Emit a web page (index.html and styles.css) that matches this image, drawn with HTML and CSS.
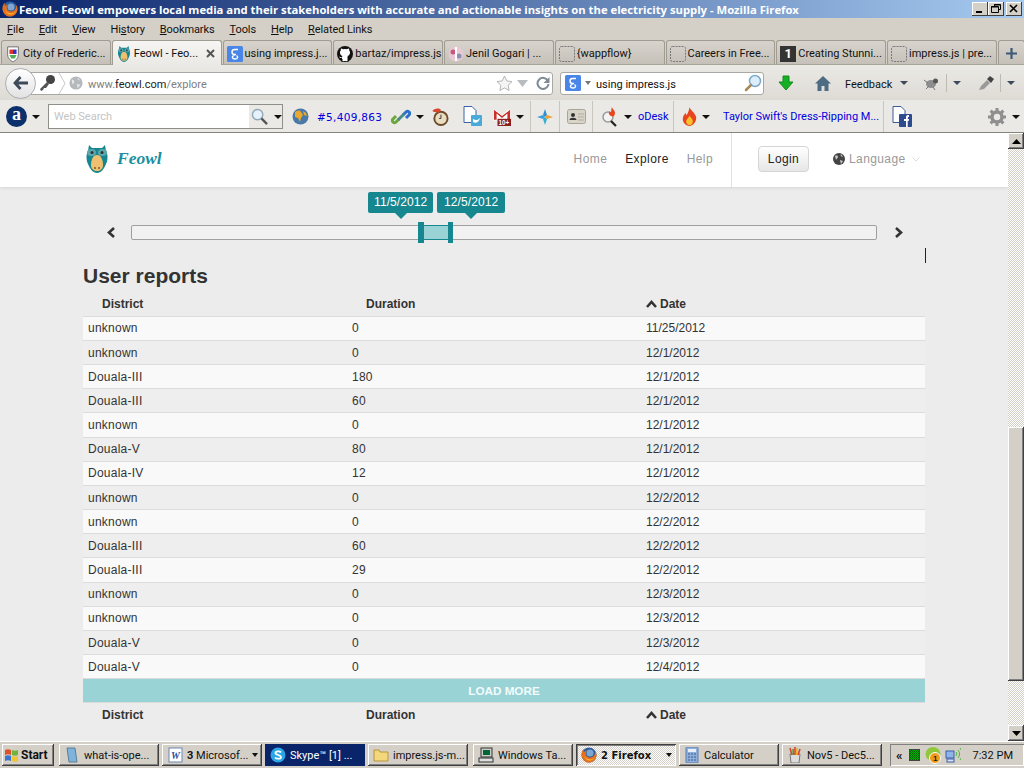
FILE: index.html
```html
<!DOCTYPE html>
<html lang="en">
<head>
    <meta charset="UTF-8">
    <title>Feowl - Mozilla Firefox</title>
    <link rel="stylesheet" href="styles.css">
</head>
<body>
    <!-- Shared icons -->
    <svg class="defs" width="0" height="0">
        <symbol id="firefox" viewBox="0 0 16 16">
            <circle cx="8" cy="8" r="7.5" fill="#2f5f9e"/>
            <circle cx="9" cy="6" r="3.5" fill="#7fa6d0"/>
            <path d="M3 1.5C1 3.5 0 6 .7 9.200 1.600 13 4.600 15.600 8 15.600c4 0 7.500-3.300 7.500-7.600 0-1.500-.5-3-1.200-4 .2 3-1 5.500-3.800 6.300C7.700 11 5 9.500 4.700 7 4.500 5.500 5.200 4.200 6 3.500 4.500 3.700 3.300 4.500 3 5.500 2.500 4.200 2.600 2.800 3 1.500z" fill="#e8701a"/>
            <path d="M3 9c1 3 3.500 5 6.500 4.500 2-.4 3.800-1.800 4.500-3.800-1.300 2-3.500 3-5.800 2.600C6 12 4.200 11 3 9z" fill="#f7b733"/>
        </symbol>
        <symbol id="owl" viewBox="0 0 22 28">
            <path d="M3 0l3 3h10l3-3 1 6c2 3 2 9 0 13-2 5-5 9-9 9s-7-4-9-9C0 15 0 9 2 6z" fill="#16868f"/>
            <ellipse cx="5.500" cy="7.500" rx="4.500" ry="3.500" fill="#5aa7ad"/>
            <ellipse cx="16.500" cy="7.500" rx="4.500" ry="3.500" fill="#5aa7ad"/>
            <circle cx="6" cy="7.500" r="1.500" fill="#333"/>
            <circle cx="16" cy="7.500" r="1.500" fill="#333"/>
            <path d="M11 10c4 0 6 5 6 10 0 4-3 6-6 6s-6-2-6-6c0-5 2-10 6-10z" fill="#efc06f"/>
            <circle cx="9" cy="23" r="1" fill="#7a5b2a"/>
            <circle cx="13" cy="23" r="1" fill="#7a5b2a"/>
        </symbol>
        <symbol id="blank" viewBox="0 0 16 16">
            <rect x=".5" y=".5" width="15" height="15" rx="2" fill="none" stroke="#777" stroke-dasharray="2 1"/>
        </symbol>
        <symbol id="gbox" viewBox="0 0 16 16">
            <rect width="16" height="16" rx="1.500" fill="#4a86e8"/>
            <path d="M11 3.500H7.500C5.500 3.500 5 5 5 6s.8 2.500 2.600 2.500H9M8 8.500l-2 1.500c-1 .8-1 3 2 3s3.200-2.500 1.500-3.500" fill="none" stroke="#fff" stroke-width="1.400"/>
        </symbol>
        <symbol id="loupe" viewBox="0 0 18 18">
            <circle cx="11" cy="7" r="5.500" fill="#dceefb" stroke="#7fa9c9" stroke-width="1.500"/>
            <path d="M7 11l-5 5" stroke="#a9895a" stroke-width="2.500" stroke-linecap="round"/>
        </symbol>
        <symbol id="flame" viewBox="0 0 16 20">
            <path d="M8 0c1 3 5 5 7 10 1 5-3 10-7 10s-8-4-7-9c.5-2 2-3.500 2.500-5 .8 1 1 2 1 3C6 7 7.500 3.500 8 0z" fill="#e8451f"/>
            <path d="M8 9c1 2 4 4 3.500 7-.4 2-2 3-3.500 3s-3.200-1-3.500-3C4.200 13 7 12 8 9z" fill="#fbc02d"/>
        </symbol>
    </svg>

    <div class="window">
        <div class="titlebar">
            <svg class="ti16"><use href="#firefox"/></svg>
            <span class="title-text">Feowl - Feowl empowers local media and their stakeholders with accurate and actionable insights on the electricity supply - Mozilla Firefox</span>
            <span class="win-btns">
                <span class="win-btn"><svg width="14" height="12"><rect x="3" y="8" width="6" height="2" fill="#000"/></svg></span>
                <span class="win-btn"><svg width="14" height="12"><path d="M5.500 3.500V1.500h6v5H9.500M2.500 3.500h7v6h-7zM2 4h7M5 2h6" fill="none" stroke="#000"/></svg></span>
                <span class="win-btn win-close"><svg width="14" height="12"><path d="M3 2l7 7M10 2l-7 7" stroke="#000" stroke-width="1.600"/></svg></span>
            </span>
        </div>

        <div class="menubar">
            <span><u>F</u>ile</span>
            <span><u>E</u>dit</span>
            <span><u>V</u>iew</span>
            <span>Hi<u>s</u>tory</span>
            <span><u>B</u>ookmarks</span>
            <span><u>T</u>ools</span>
            <span><u>H</u>elp</span>
            <span><u>R</u>elated Links</span>
        </div>

        <div class="tabs">
            <div class="tab">
                <svg class="ti16" viewBox="0 0 16 18"><path d="M2 1h12v9c0 4-3 6-6 8-3-2-6-4-6-8z" fill="#fff" stroke="#666"/><rect x="4" y="4" width="4" height="5" fill="#d33"/><rect x="8" y="4" width="4" height="5" fill="#33b"/><path d="M4 10h8l-2 4H6z" fill="#5a5"/></svg>
                <span class="tab-label">City of Frederic...</span>
            </div>
            <div class="tab tab-active">
                <svg class="ti16"><use href="#owl"/></svg>
                <span class="tab-label">Feowl - Feo...</span>
                <svg class="tab-x" width="9" height="9"><path d="M1 1l7 7M8 1L1 8" stroke="#555" stroke-width="2"/></svg>
            </div>
            <div class="tab">
                <svg class="ti16"><use href="#gbox"/></svg>
                <span class="tab-label">using impress.j...</span>
            </div>
            <div class="tab">
                <svg class="ti16" viewBox="0 0 16 16"><circle cx="8" cy="8" r="8" fill="#111"/><path d="M5 15v-3c-2 .4-2.500-1-3-1.500 1 0 1.500 1 3 1 0-1 .3-1.300.6-1.600C3.500 9.500 3 8 3 6.500c0-1 .3-1.500.8-2-.1-.6-.1-1.300.2-2 .8 0 1.500.4 2 .8a7 7 0 0 1 4 0c.5-.4 1.200-.8 2-.8.300.7.300 1.400.2 2 .5.5.8 1 .8 2 0 1.500-.5 3-2.600 3.400.4.400.6.800.6 1.600v3.500z" fill="#fff"/><path d="M5 16v-3M11 16v-5" stroke="#111"/></svg>
                <span class="tab-label">bartaz/impress.js</span>
            </div>
            <div class="tab">
                <svg class="ti16" viewBox="0 0 16 16"><circle cx="8" cy="8" r="7.500" fill="#e7c9d4"/><circle cx="5" cy="6" r="2.500" fill="#c9567f"/><circle cx="11" cy="10" r="2.500" fill="#8a8fb5"/><rect x="7" y="1" width="2" height="14" fill="#fff"/></svg>
                <span class="tab-label">Jenil Gogari | ...</span>
            </div>
            <div class="tab">
                <svg class="ti16"><use href="#blank"/></svg>
                <span class="tab-label">{wappflow}</span>
            </div>
            <div class="tab">
                <svg class="ti16"><use href="#blank"/></svg>
                <span class="tab-label">Careers in Free...</span>
            </div>
            <div class="tab">
                <span class="tuts-icon">1</span>
                <span class="tab-label">Creating Stunni...</span>
            </div>
            <div class="tab">
                <svg class="ti16"><use href="#blank"/></svg>
                <span class="tab-label">impress.js | pre...</span>
            </div>
            <div class="tab tab-new">
                <svg width="11" height="11"><path d="M5.500 0v11M0 5.500h11" stroke="#3c5a78" stroke-width="2.200"/></svg>
            </div>
        </div>

        <div class="navbar">
            <span class="back-btn">
                <svg width="16" height="14"><path d="M7.500 1L2 7l5.500 6M2.500 7H15" fill="none" stroke="#3c4a5a" stroke-width="2.800"/></svg>
            </span>
            <div class="urlbar">
                <svg class="key" width="18" height="18" viewBox="0 0 18 18"><circle cx="12.500" cy="5.500" r="4.500" fill="#444"/><path d="M9 8l-7 7 1 2 2-1 1-2 2 0 3-4" fill="#555"/></svg>
                <svg class="url-sep" width="8" height="21"><path d="M1 0l6 10.500-6 10.500" fill="#fff" stroke="#c8c8c8"/></svg>
                <svg class="globe" width="14" height="14" viewBox="0 0 16 16"><circle cx="8" cy="8" r="7.500" fill="#b5b8bc"/><path d="M3 4c2 0 3 1 3 3s-2 1-2 3M10 2c-1 2 1 3 3 3M9 9l4 1-3 4z" fill="#e6e8ea"/></svg>
                <span class="url-text">www.<b>feowl.com</b>/explore</span>
                <svg class="star" width="17" height="16" viewBox="0 0 17 16"><path d="M8.500 1l2.300 4.900 5.200.7-3.800 3.600.9 5.300-4.600-2.600-4.600 2.600.9-5.300L1 6.600l5.200-.7z" fill="#f4f4f4" stroke="#b5b5b5"/></svg>
                <svg class="url-drop" width="11" height="7"><path d="M0 0h11L5.500 7z" fill="#b8bcc0"/></svg>
                <svg class="reload" width="14" height="14" viewBox="0 0 14 14"><path d="M12 5a5.500 5.500 0 1 0 .5 3" fill="none" stroke="#7f8a94" stroke-width="2"/><path d="M13.500 1v6h-6z" fill="#7f8a94"/></svg>
            </div>
            <div class="searchbar">
                <svg class="ti16"><use href="#gbox"/></svg>
                <i class="caret caret-grey"></i>
                <span class="search-text">using impress.js</span>
                <svg class="search-loupe" width="18" height="18"><use href="#loupe"/></svg>
            </div>
            <svg class="down-arrow" width="16" height="16" viewBox="0 0 16 16"><path d="M5 1h6v6h4l-7 8-7-8h4z" fill="#17b024" stroke="#128a1c"/></svg>
            <svg class="home" width="16" height="15" viewBox="0 0 16 15"><path d="M8 0L0 7.500h2.500V15h4v-5h3v5h4V7.500H16z" fill="#4d6b82"/></svg>
            <span class="feedback">Feedback</span>
            <i class="caret caret-slate"></i>
            <svg class="bug" width="18" height="13" viewBox="0 0 16 13"><ellipse cx="8" cy="7" rx="5" ry="4" fill="#8d8d8d"/><circle cx="12.500" cy="4" r="2.500" fill="#555"/><path d="M1 3l4 3M3 12l3-3M10 10l2 3" stroke="#777"/></svg>
            <span class="nav-sep"></span>
            <i class="caret caret-slate"></i>
            <svg class="dropper" width="16" height="15" viewBox="0 0 16 15"><path d="M1 14l2-4 6-6 3 3-6 6z" fill="#999"/><path d="M9 3l3-3 4 3-3 4z" fill="#444"/></svg>
            <span class="nav-sep"></span>
            <i class="caret caret-slate"></i>
        </div>

        <div class="bookmarks">
            <div class="bm-group bm-first">
                <span class="alexa">a</span>
                <i class="caret"></i>
                <div class="web-search">
                    <span class="web-search-text">Web Search</span>
                    <span class="web-search-btn">
                        <svg width="17" height="17" viewBox="0 0 18 18"><circle cx="7" cy="7" r="5.500" fill="#e8f2fa" stroke="#8fa9bd" stroke-width="1.500"/><path d="M11 11l6 6" stroke="#555" stroke-width="2.500"/></svg>
                        <i class="caret"></i>
                    </span>
                </div>
                <svg class="ti17" viewBox="0 0 17 17"><circle cx="8.500" cy="8.500" r="8" fill="#4a78a8"/><path d="M3 4c3-2 5-2 6 0l2 3-2 3-1 4-2-4-3-1zM11 3l3 2 1 3-3-1z" fill="#e8a92c"/></svg>
                <span class="rank">#5,409,863</span>
                <svg class="ti20" viewBox="0 0 20 20"><path d="M8 12l-3 3c-2 2-5-1-3-3l3-3" fill="none" stroke="#6aa83a" stroke-width="3"/><path d="M12 8l3-3c2-2 5 1 3 3l-3 3" fill="none" stroke="#2a6fc9" stroke-width="3"/><path d="M7 13l6-6" stroke="#4a8a8a" stroke-width="3"/></svg>
                <i class="caret"></i>
                <svg class="ti18 push-a" viewBox="0 0 18 19"><circle cx="10" cy="11" r="7" fill="#e9dcc0" stroke="#6b4a2a" stroke-width="2"/><path d="M10 7v4h-2" stroke="#333" fill="none"/><path d="M1 3c3-3 7-3 9-1l-2 3-6-1z" fill="#d8452c"/></svg>
                <svg class="ti21 push-b" viewBox="0 0 21 21"><path d="M2 .5h8l4 4v12H2z" fill="#fff" stroke="#3a62a8"/><rect x="9" y="9" width="11" height="11" rx="1" fill="#49a9d8"/><path d="M11 13c3 2 5 1 7-1-1 4-4 6-7 4" fill="#fff"/></svg>
                <svg class="ti18 push-c" viewBox="0 0 20 20"><path d="M0 2h3l7 6 7-6h3v12H0z" fill="#fff"/><path d="M1 2v11h3V6l6 5 6-5v7h3V2l-9 7z" fill="#c9302c"/><rect x="5" y="12" width="15" height="8" fill="#8a1f1b"/><text x="6" y="19" class="gmail-count">10+</text></svg>
                <i class="caret"></i>
            </div>
            <div class="bm-group bm-small">
                <svg width="16" height="16" viewBox="0 0 16 16"><path d="M8 0l2 6-2 2-2-2z" fill="#2f8fd0"/><path d="M8 16l-2-6 2-2 2 2z" fill="#2fb0d0"/><path d="M0 8l6-2 2 2-2 2z" fill="#3a9fe0"/><path d="M16 8l-6 2-2-2 2-2z" fill="#f0a030"/></svg>
            </div>
            <div class="bm-group bm-card">
                <svg width="19" height="15" viewBox="0 0 19 15"><rect x=".5" y=".5" width="18" height="14" rx="2" fill="#d8d4c8" stroke="#a8a498"/><circle cx="6" cy="6" r="2" fill="#333"/><path d="M2.500 11c0-3 7-3 7 0z" fill="#333"/><path d="M11 5h6M11 8h6M11 11h6" stroke="#b0ac9e"/></svg>
            </div>
            <div class="bm-group bm-odesk">
                <svg width="18" height="20" viewBox="0 0 18 20"><circle cx="7" cy="10" r="5" fill="#f3f3f3" stroke="#999" stroke-width="1.500"/><path d="M10 14l5 5" stroke="#222" stroke-width="2.200"/><path d="M11 0c0 2 3 3 3 6s-2 4-4 3-3-3-1-5c0 1 .5 1.500 1 1 .5-1 0-3 1-5z" fill="#e8451f"/></svg>
                <i class="caret"></i>
                <span class="bm-link">oDesk</span>
            </div>
            <div class="bm-group bm-taylor">
                <svg width="15" height="19"><use href="#flame"/></svg>
                <i class="caret"></i>
                <span class="bm-link bm-news">Taylor Swift's Dress-Ripping M...</span>
            </div>
            <div class="bm-group bm-last">
                <svg class="ti21" viewBox="0 0 21 21"><path d="M1 .5h8l4 4v12H1z" fill="#fff" stroke="#3a5a9a"/><rect x="7" y="8" width="13" height="13" rx="1" fill="#2f4b8f"/><path d="M14 21v-6h-2v-2h2v-2c0-1.500 1-2 3-2v2c-1 0-1.200 0-1.200 1v1H17l-.3 2h-1v6z" fill="#fff"/></svg>
            </div>
            <div class="bm-gear">
                <svg width="18" height="18" viewBox="0 0 18 18"><circle cx="9" cy="9" r="5" fill="none" stroke="#8f8f8f" stroke-width="3.500"/><path d="M9 0v4M9 14v4M0 9h4M14 9h4M2.600 2.600l3 3M12.400 12.400l3 3M15.400 2.600l-3 3M5.600 12.400l-3 3" stroke="#8f8f8f" stroke-width="3"/></svg>
                <i class="caret"></i>
            </div>
        </div>

        <div class="viewport">
            <div class="page">
                <header class="site-head">
                    <div class="logo">
                        <svg width="22" height="28"><use href="#owl"/></svg>
                        <span class="logo-text">Feowl</span>
                    </div>
                    <nav class="site-nav">
                        <a>Home</a>
                        <a class="current">Explore</a>
                        <a>Help</a>
                    </nav>
                    <div class="site-user">
                        <button class="login">Login</button>
                        <svg width="12" height="12" viewBox="0 0 12 12"><circle cx="6" cy="6" r="6" fill="#444"/><path d="M2 3c2-1 3 0 3 1S3 6 3 7M8 1c-1 2 0 2 2 3M7 7l3 1-2 3z" fill="#ccc"/></svg>
                        <span class="lang">Language</span>
                        <svg width="8" height="5"><path d="M.5.500l3.500 3.500L7.500.5" fill="none" stroke="#ddd"/></svg>
                    </div>
                </header>

                <div class="timeline">
                    <svg class="tl-arrow" width="9" height="11"><path d="M7 1L2 5.500 7 10" fill="none" stroke="#333" stroke-width="2.600"/></svg>
                    <div class="slider">
                        <div class="slider-range"></div>
                        <div class="date-tip tip-from">11/5/2012</div>
                        <div class="date-tip tip-to">12/5/2012</div>
                    </div>
                    <svg class="tl-arrow" width="9" height="11"><path d="M2 1l5 4.500L2 10" fill="none" stroke="#333" stroke-width="2.600"/></svg>
                </div>

                <h2 class="reports-title">User reports</h2>

                <div class="reports">
                    <div class="row row-head">
                        <span>District</span>
                        <span>Duration</span>
                        <span class="date-head"><svg width="11" height="8"><path d="M1 7l4.500-5L10 7" fill="none" stroke="#333" stroke-width="2.600"/></svg>Date</span>
                    </div>
                    <div class="row"><span>unknown</span><span>0</span><span>11/25/2012</span></div>
                    <div class="row"><span>unknown</span><span>0</span><span>12/1/2012</span></div>
                    <div class="row"><span>Douala-III</span><span>180</span><span>12/1/2012</span></div>
                    <div class="row"><span>Douala-III</span><span>60</span><span>12/1/2012</span></div>
                    <div class="row"><span>unknown</span><span>0</span><span>12/1/2012</span></div>
                    <div class="row"><span>Douala-V</span><span>80</span><span>12/1/2012</span></div>
                    <div class="row"><span>Douala-IV</span><span>12</span><span>12/1/2012</span></div>
                    <div class="row"><span>unknown</span><span>0</span><span>12/2/2012</span></div>
                    <div class="row"><span>unknown</span><span>0</span><span>12/2/2012</span></div>
                    <div class="row"><span>Douala-III</span><span>60</span><span>12/2/2012</span></div>
                    <div class="row"><span>Douala-III</span><span>29</span><span>12/2/2012</span></div>
                    <div class="row"><span>unknown</span><span>0</span><span>12/3/2012</span></div>
                    <div class="row"><span>unknown</span><span>0</span><span>12/3/2012</span></div>
                    <div class="row"><span>Douala-V</span><span>0</span><span>12/3/2012</span></div>
                    <div class="row"><span>Douala-V</span><span>0</span><span>12/4/2012</span></div>
                    <div class="load-more">LOAD MORE</div>
                    <div class="row row-head">
                        <span>District</span>
                        <span>Duration</span>
                        <span class="date-head"><svg width="11" height="8"><path d="M1 7l4.500-5L10 7" fill="none" stroke="#333" stroke-width="2.600"/></svg>Date</span>
                    </div>
                </div>
                <span class="text-cursor"></span>
            </div>

            <div class="scrollbar">
                <span class="sb-btn"><svg width="9" height="5"><path d="M0 5h9L4.500 0z" fill="#000"/></svg></span>
                <span class="sb-track-top"></span>
                <span class="sb-thumb"></span>
                <span class="sb-track-bottom"></span>
                <span class="sb-btn"><svg width="9" height="5"><path d="M0 0h9L4.500 5z" fill="#000"/></svg></span>
            </div>
        </div>

        <div class="taskbar">
            <span class="task start">
                <svg width="15" height="15" viewBox="0 0 15 15"><path d="M1 2c2-1 4-1 6 0v5C5 6 3 6 1 7z" fill="#e0502a"/><path d="M8 2c2 1 4 1 6 0v5c-2 1-4 1-6 0z" fill="#6fb33a"/><path d="M1 8c2-1 4-1 6 0v5c-2-1-4-1-6 0z" fill="#3a76d0"/><path d="M8 8c2 1 4 1 6 0v5c-2 1-4 1-6 0z" fill="#f2c230"/></svg>
                Start
            </span>
            <span class="task task-1">
                <svg class="ti16" viewBox="0 0 16 16"><path d="M3 1h8l2 14H5z" fill="#7fb3d9" stroke="#5a7f9a"/></svg>
                <span class="task-label">what-is-ope...</span>
            </span>
            <span class="task task-2">
                <svg class="ti16" viewBox="0 0 16 16"><rect x="2" y="1" width="13" height="14" fill="#fff" stroke="#6a85b5"/><text x="4" y="12" class="word-w">W</text></svg>
                <span class="task-label"><b>3</b> Microsof...</span>
                <i class="caret"></i>
            </span>
            <span class="task task-3 task-skype">
                <svg class="ti16" viewBox="0 0 16 16"><circle cx="8" cy="8" r="7.500" fill="#2aa6e6"/><path d="M11 5.500C10 4 5.500 4 5.500 6c0 2.500 5.500 1.500 5.500 4.200C11 12 6.500 12.300 5 10.500" fill="none" stroke="#fff" stroke-width="1.800"/></svg>
                <span class="task-label">Skype™ [1] ...</span>
            </span>
            <span class="task task-4">
                <svg class="ti16" viewBox="0 0 16 16"><path d="M1 3h5l1 2h8v9H1z" fill="#f4d77a" stroke="#b8963a"/></svg>
                <span class="task-label">impress.js-m...</span>
            </span>
            <span class="task task-5">
                <svg class="ti16" viewBox="0 0 16 16"><rect x="3" y="1" width="11" height="9" fill="#ccc" stroke="#333"/><rect x="5" y="3" width="7" height="5" fill="#063"/><rect x="1" y="11" width="14" height="4" fill="#ddd" stroke="#333"/></svg>
                <span class="task-label">Windows Ta...</span>
            </span>
            <span class="task task-6 task-pressed">
                <svg class="ti16"><use href="#firefox"/></svg>
                <span class="task-label"><b>2 Firefox</b></span>
                <i class="caret"></i>
            </span>
            <span class="task task-7">
                <svg class="ti16" viewBox="0 0 16 16"><rect x="2" y="0" width="12" height="16" rx="1" fill="#8fb0dc" stroke="#5a7cae"/><rect x="4" y="2" width="8" height="3" fill="#e8f0fa"/><path d="M4 7h2M7 7h2M10 7h2M4 10h2M7 10h2M10 10h2M4 13h2M7 13h2M10 13h2" stroke="#3a5a8a"/></svg>
                <span class="task-label">Calculator</span>
            </span>
            <span class="task task-8">
                <svg class="ti16" viewBox="0 0 16 16"><path d="M3 7h10l-1 9H4z" fill="#ddd" stroke="#777"/><path d="M5 8L3 1M8 8V0M11 8l2-6" stroke="#d8452c" stroke-width="1.600"/><path d="M6.500 8L6 2" stroke="#4a9a3a" stroke-width="1.600"/><path d="M9.500 8L10 1" stroke="#e8b02c" stroke-width="1.600"/></svg>
                <span class="task-label">Nov5 - Dec5...</span>
            </span>
            <span class="tray">
                <b class="tray-more">«</b>
                <span class="tray-meter"></span>
                <svg width="18" height="19" viewBox="0 0 18 19"><ellipse cx="8" cy="8" rx="7.500" ry="7" fill="#8fc93a"/><circle cx="10" cy="12" r="5.500" fill="#f09a1a" stroke="#fff"/><text x="8" y="15" class="tray-num">1</text></svg>
                <svg width="16" height="16" viewBox="0 0 16 16"><rect x="1" y="4" width="8" height="7" fill="#8fb4e8" stroke="#3a5fa8"/><rect x="2" y="12" width="7" height="3" fill="#d8e2f4" stroke="#3a5fa8"/><path d="M11 5a3 3 0 0 1 0 4M13 3a6 6 0 0 1 0 8M15 1a9 9 0 0 1 0 12" fill="none" stroke="#4fb33a"/></svg>
                <span class="clock">7:32 PM</span>
            </span>
        </div>
    </div>
</body>
</html>
```

FILE: styles.css
```css
/* Base */
body {
    margin: 0;
    overflow: hidden;
    font-family: Roboto, "Liberation Sans", sans-serif;
    font-size: 11px;
    color: #111;
}

.defs {
    display: block;
    height: 0;
}

.window {
    width: 1024px;
    height: 768px;
    display: flex;
    flex-direction: column;
    background-color: #d4d0c8;
    overflow: hidden;
}

.ti16 { width: 16px; height: 16px; flex: none; }
.ti17 { width: 17px; height: 17px; flex: none; }
.ti18 { width: 18px; height: 18px; flex: none; }
.ti20 { width: 20px; height: 20px; flex: none; }
.ti21 { width: 21px; height: 21px; flex: none; }

.caret {
    display: inline-block;
    flex: none;
    width: 0;
    height: 0;
    border-left: 4px solid transparent;
    border-right: 4px solid transparent;
    border-top: 4px solid #111;
}

.caret-grey { border-top-color: #777; border-left-width: 3px; border-right-width: 3px; }
.caret-slate { border-top-color: #3c4a5a; }

/* Title bar */
.titlebar {
    height: 18px;
    flex: none;
    display: flex;
    align-items: center;
    padding-left: 2px;
    background: linear-gradient(to right, #0a246a, #a6caf0);
    color: #fff;
}

.title-text {
    margin-left: 1px;
    font-family: "Open Sans", sans-serif;
    font-weight: 700;
    font-size: 11.27px;
    white-space: nowrap;
}

.win-btns {
    margin-left: auto;
    display: flex;
    padding-right: 2px;
}

.win-btn {
    width: 16px;
    height: 14px;
    display: flex;
    align-items: center;
    justify-content: center;
    background-color: #d4d0c8;
    box-shadow: inset -1px -1px #404040, inset 1px 1px #fff;
}

.win-close { margin-left: 2px; }

/* Menu */
.menubar {
    height: 22px;
    flex: none;
    display: flex;
    align-items: center;
    gap: 15px;
    padding-left: 7px;
    box-sizing: border-box;
    letter-spacing: -.1px;
}

/* Tabs */
.tabs {
    height: 25px;
    flex: none;
    display: flex;
    padding-left: 1px;
    gap: 1px;
    border-bottom: 1px solid #a8a498;
    box-sizing: border-box;
}

.tab {
    width: 109.75px;
    height: 24px;
    flex: none;
    display: flex;
    align-items: center;
    gap: 2px;
    padding: 2px 0 0 3px;
    box-sizing: border-box;
    background: linear-gradient(#d8d4cd, #c5c1b9);
    border: 1px solid #a09c92;
    border-bottom: none;
    border-radius: 3px 3px 0 0;
    white-space: nowrap;
    overflow: hidden;
}

.tab-active {
    height: 25px;
    padding-bottom: 1px;
    background: linear-gradient(#f6f5f3, #ebe9e5);
    position: relative;
}

.tab-x {
    margin-left: auto;
    margin-right: 6px;
    flex: none;
}

.tab-new {
    width: 27px;
    padding-left: 7px;
}

.tuts-icon {
    width: 16px;
    height: 16px;
    flex: none;
    background-color: #333;
    color: #fff;
    font-weight: 700;
    font-size: 13px;
    line-height: 16px;
    text-align: center;
}

/* Navigation toolbar */
.navbar {
    height: 35px;
    flex: none;
    display: flex;
    align-items: center;
    box-sizing: border-box;
    padding: 1px 0 0 5px;
    background: linear-gradient(#ebe9e5, #dedbd5);
}

.back-btn {
    width: 31px;
    height: 31px;
    flex: none;
    box-sizing: border-box;
    display: flex;
    align-items: center;
    justify-content: center;
    border: 1px solid #a9adb3;
    border-radius: 50%;
    background: linear-gradient(#fff, #e2e2e2);
    position: relative;
    z-index: 2;
}

.urlbar {
    width: 523px;
    height: 23px;
    margin-left: -6px;
    flex: none;
    display: flex;
    align-items: center;
    box-sizing: border-box;
    padding-left: 7px;
    background-color: #fff;
    border: 1px solid #a8a8a4;
    border-radius: 0 3px 3px 0;
}

.url-sep { margin-left: 2px; margin-right: 3px; flex: none; }
.globe { flex: none; }

.url-text {
    margin-left: 5px;
    padding-top: 2px;
    color: #808080;
}

.url-text b {
    font-weight: 400;
    color: #222;
}

.star { margin-left: auto; }
.url-drop { margin-left: 4px; }
.reload { margin-left: 8px; margin-right: 2px; }

.searchbar {
    width: 204px;
    height: 23px;
    margin-left: 7px;
    flex: none;
    display: flex;
    align-items: center;
    box-sizing: border-box;
    padding-left: 4px;
    background-color: #fff;
    border: 1px solid #a8a8a4;
    border-radius: 3px;
}

.searchbar .caret { margin-left: 4px; }
.search-text { margin-left: 5px; padding-top: 2px; }
.search-loupe { margin-left: auto; margin-right: 1px; }

.down-arrow { margin-left: 14px; flex: none; }
.home { margin-left: 21px; flex: none; }
.feedback { margin-left: 14px; padding-top: 2px; }
.navbar > .feedback + .caret { margin-left: 8px; }
.bug { margin-left: 14px; flex: none; }
.dropper { margin-left: 17px; flex: none; }

.nav-sep {
    width: 1px;
    height: 18px;
    margin: 0 6px 0 6px;
    flex: none;
    background-color: #bdbab2;
}

/* Bookmarks toolbar */
.bookmarks {
    height: 33px;
    flex: none;
    display: flex;
    box-sizing: border-box;
    padding-top: 1px;
    background-color: #ebe9e5;
    border-bottom: 1px solid #86847c;
}

.bm-group {
    display: flex;
    flex: none;
    align-items: center;
    gap: 9px;
    border-right: 1px solid #c9c6be;
    box-sizing: border-box;
}

.bm-group svg { flex: none; }
.bm-group .caret { margin-left: -4px; }

.bm-first { width: 531px; padding-left: 6px; }
.bm-small { width: 29px; padding-left: 6px; }
.bm-card { width: 33px; padding-left: 7px; }
.bm-odesk { width: 81px; padding-left: 8px; }
.bm-odesk .bm-link { margin-left: -3px; }
.bm-taylor { width: 210px; padding-left: 8px; }
.bm-taylor .caret { margin-right: 4px; }
.bm-last { border-right: none; padding-left: 8px; }

.bm-gear {
    margin-left: auto;
    padding-right: 4px;
    display: flex;
    align-items: center;
    gap: 6px;
}

.alexa {
    width: 21px;
    height: 21px;
    flex: none;
    border-radius: 50%;
    background-color: #0d2f6b;
    color: #fff;
    font: 700 18px/17px "Liberation Serif", serif;
    text-align: center;
}

.web-search {
    width: 235px;
    height: 25px;
    margin-left: -1px;
    flex: none;
    display: flex;
    box-sizing: border-box;
    border: 1px solid #8f8f8a;
    background-color: #fff;
}

.web-search-text {
    flex: 1;
    padding-left: 5px;
    line-height: 23px;
    color: #c4c4c4;
}

.web-search-btn {
    width: 33px;
    display: flex;
    align-items: center;
    gap: 6px;
    padding-left: 2px;
    box-sizing: border-box;
    background-color: #ebe9e5;
}

.web-search-btn .caret { margin-left: 0; }

.rank {
    color: #0000e0;
    letter-spacing: .3px;
    font-family: "DejaVu Sans", sans-serif;
    font-size: 10.5px;
    margin-left: -1px;
}

.bm-link { color: #0000e0; white-space: nowrap; }
.push-a { margin-left: -2px; }
.push-b { margin-left: 4px; }
.push-c { margin-left: 1px; }

.gmail-count {
    font: 700 7px "Liberation Sans", sans-serif;
    fill: #fff;
}

/* Web page */
.viewport {
    flex: 1;
    min-height: 0;
    display: flex;
}

.page {
    width: 1008px;
    flex: none;
    position: relative;
    overflow: hidden;
    background-color: #ececec;
    font-family: "Liberation Sans", Arial, sans-serif;
    font-size: 12px;
    letter-spacing: .4px;
    color: #333;
}

.site-head {
    height: 54px;
    display: flex;
    align-items: stretch;
    background-color: #fff;
    box-shadow: 0 1px 3px rgba(0, 0, 0, .1);
}

.logo {
    display: flex;
    align-items: center;
    gap: 9px;
    padding-left: 86px;
    padding-bottom: 3px;
}

.logo-text {
    font: italic 700 17.5px "Liberation Serif", serif;
    letter-spacing: 0;
    color: #1a8fa0;
}

.site-nav {
    margin-left: auto;
    display: flex;
    align-items: center;
    gap: 18px;
    padding-right: 18px;
    border-right: 1px solid #e2e2e2;
    padding-bottom: 2px;
    color: #999;
}

.site-nav .current { color: #222; }

.site-user {
    width: 276px;
    display: flex;
    align-items: center;
    padding-left: 26px;
    padding-bottom: 2px;
    box-sizing: border-box;
}

.login {
    width: 51px;
    height: 26px;
    margin-right: 24px;
    padding: 0;
    font: inherit;
    letter-spacing: .4px;
    color: #222;
    border: 1px solid #d5d5d5;
    border-radius: 4px;
    background: linear-gradient(#fff, #e6e6e6);
}

.lang {
    margin: 0 6px 0 4px;
    color: #999;
}

.timeline {
    display: flex;
    align-items: center;
    margin-top: 38px;
    padding-left: 107px;
}

.tl-arrow { flex: none; }

.slider {
    width: 746px;
    height: 15px;
    margin: 0 17px 0 15px;
    box-sizing: border-box;
    position: relative;
    background-color: #f1f1f1;
    border: 1px solid #a0a0a0;
    border-radius: 2px;
}

.slider-range {
    position: absolute;
    left: 286px;
    top: -4px;
    width: 35px;
    height: 21px;
    box-sizing: border-box;
    background-color: #99d3d6;
    border-left: 6px solid #16868f;
    border-right: 5px solid #16868f;
    box-shadow: inset 0 3px #ececec, inset 0 4px #16868f, inset 0 -3px #ececec, inset 0 -4px #16868f;
}

.date-tip {
    position: absolute;
    top: -34px;
    height: 21px;
    padding: 0 6px;
    line-height: 21px;
    letter-spacing: .1px;
    color: #fff;
    background-color: #16868f;
    border-radius: 2px;
}

.date-tip::after {
    content: "";
    position: absolute;
    left: 50%;
    top: 21px;
    margin-left: -6px;
    border-left: 6px solid transparent;
    border-right: 6px solid transparent;
    border-top: 6px solid #16868f;
}

.tip-from { left: 236px; }
.tip-to { left: 305px; padding: 0 7px; }

.reports-title {
    margin: 24px 0 4.6px 83px;
    font-size: 21px;
    line-height: 24px;
    font-weight: 700;
    letter-spacing: 0;
    color: #333;
}

.reports {
    width: 842px;
    margin-left: 83px;
}

.row {
    height: 24.18px;
    box-sizing: border-box;
    display: grid;
    grid-template-columns: 264px 294px 1fr;
    align-items: center;
    padding-left: 5px;
    letter-spacing: .25px;
    border-bottom: 1px solid #dcdcdc;
    background-color: #eee;
}

.row span:last-child { letter-spacing: 0; }

.row:nth-child(even) {
    background-color: #f9f9f9;
}

.reports .row-head {
    background-color: transparent;
    font-weight: 700;
    letter-spacing: 0;
}

.row-head span { padding-left: 14px; }

.row-head .date-head {
    padding-left: 0;
    display: flex;
    align-items: center;
    gap: 3px;
}

.load-more + .row-head { border-bottom: none; }

.load-more {
    height: 24px;
    box-sizing: border-box;
    text-align: center;
    line-height: 24px;
    font-size: 11.7px;
    font-weight: 700;
    letter-spacing: 0;
    color: #f4fbfb;
    background-color: #99d3d6;
    border-bottom: 1px solid #dcdcdc;
}

.text-cursor {
    position: absolute;
    left: 925px;
    top: 115px;
    width: 1px;
    height: 15px;
    background-color: #222;
}

/* Scrollbar */
.scrollbar {
    width: 16px;
    flex: none;
    display: flex;
    flex-direction: column;
}

.sb-btn {
    height: 16px;
    flex: none;
    display: flex;
    align-items: center;
    justify-content: center;
    background-color: #d4d0c8;
    box-shadow: inset -1px -1px #404040, inset 1px 1px #fff, inset -2px -2px #808080;
}

.sb-track-top,
.sb-track-bottom {
    background: repeating-conic-gradient(#fff 0 25%, #d4d0c8 0 50%) 0 0 / 2px 2px;
}

.sb-track-top { height: 278px; flex: none; }
.sb-track-bottom { flex: 1; }

.sb-thumb {
    height: 254px;
    flex: none;
    background-color: #d4d0c8;
    box-shadow: inset -1px -1px #404040, inset 1px 1px #fff, inset -2px -2px #808080;
}

/* Task bar */
.taskbar {
    height: 27px;
    flex: none;
    display: flex;
    align-items: center;
    box-sizing: border-box;
    padding-left: 2px;
    border-top: 1px solid #fff;
    background-color: #d4d0c8;
}

.task {
    height: 22px;
    width: 100px;
    flex: none;
    display: flex;
    align-items: center;
    gap: 4px;
    padding-left: 5px;
    box-sizing: border-box;
    background-color: #d4d0c8;
    box-shadow: inset -1px -1px #404040, inset 1px 1px #fff, inset -2px -2px #808080;
    white-space: nowrap;
    margin-right: 3px;
}

.task-label { overflow: hidden; }
.task .caret { margin-left: auto; margin-right: 4px; border-left-width: 3px; border-right-width: 3px; }

.start {
    width: 52px;
    padding-left: 2px;
    gap: 2px;
    margin-right: 5px;
    font-weight: 700;
    font-size: 12px;
}

.task-skype {
    background-color: #0a246a;
    color: #fff;
    box-shadow: none;
}

.task-5 { margin-left: 2px; }

.task-pressed {
    background: repeating-conic-gradient(#fff 0 25%, #d4d0c8 0 50%) 0 0 / 2px 2px;
    box-shadow: inset 1px 1px #404040, inset -1px -1px #fff, inset 2px 2px #808080;
}

.task-pressed b {
    font-family: "DejaVu Sans", sans-serif;
    font-size: 10px;
}

.word-w {
    font: italic 700 10px "Liberation Serif", serif;
    fill: #2a4f9a;
}

.tray {
    height: 22px;
    margin-left: 5px;
    flex: 1;
    display: flex;
    align-items: center;
    gap: 2px;
    padding-left: 6px;
    box-shadow: inset 1px 1px #808080, inset -1px -1px #fff;
}

.tray-more { font-size: 13px; margin-right: 4px; }

.tray-meter {
    width: 11px;
    height: 12px;
    margin-right: 3px;
    background: repeating-conic-gradient(#006400 0 25%, #00b000 0 50%) 0 0 / 2px 2px;
    border: 1px solid #444;
    box-sizing: border-box;
}

.tray-num {
    font: 700 8px "Liberation Sans", sans-serif;
    fill: #222;
}

.clock { margin-left: 10px; }
```
